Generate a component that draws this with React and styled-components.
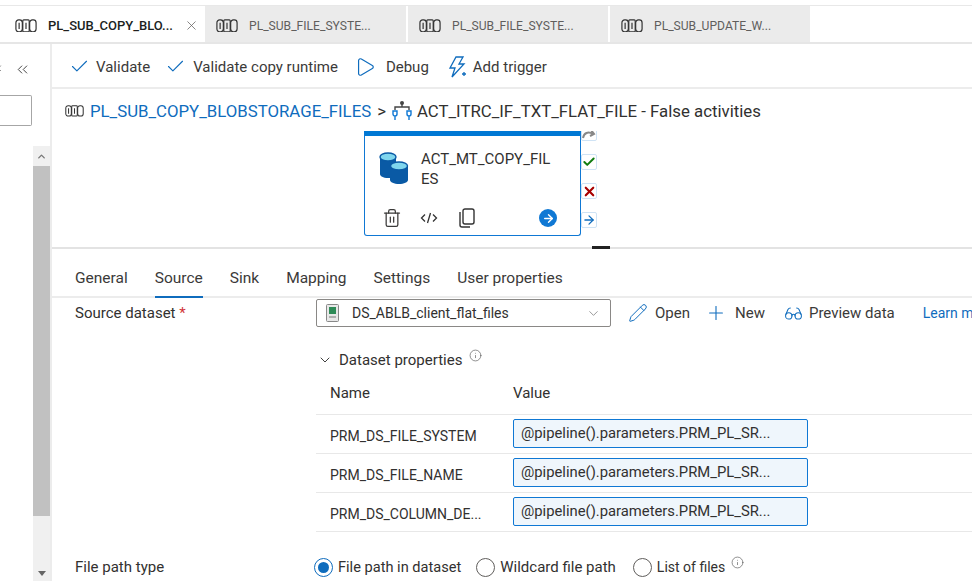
import React from 'react';
import styled, { createGlobalStyle } from 'styled-components';
import { ChevronsLeft, ChevronsDown, ChevronDown, Check, Play, Pencil, Plus, Glasses, Trash2, X, ArrowRight, Info, ChevronUp } from 'lucide-react';

const GlobalStyle = createGlobalStyle`
    html, body {
        margin: 0;
        padding: 0;
        background: #fff;
    }
    body {
        width: 972px;
        height: 581px;
        overflow: hidden;
        font-family: Roboto, "Noto Sans", sans-serif;
        color: #323130;
    }
    * {
        box-sizing: border-box;
    }
    svg {
        flex-shrink: 0;
    }
`

const Page = styled.div`
    width: 972px;
    height: 581px;
    display: flex;
    flex-direction: column;
    overflow: hidden;
`

const TabStrip = styled.div`
    display: flex;
    height: 39px;
    margin-top: 5px;
    padding-left: 2px;
    gap: 2px;
    border-top: 1px solid #e8e8e8;
    border-bottom: 2px solid #e6e6e6;
    flex-shrink: 0;
`
const PipeTab = styled.div`
    width: ${p => p.$width}px;
    height: 36px;
    display: flex;
    align-items: center;
    padding: 3px 0 0 ${p => p.$active ? 13 : 11}px;
    gap: 11px;
    font-size: ${p => p.$active ? 13 : 12.1}px;
    white-space: nowrap;
    background: ${p => p.$active ? '#fff' : '#ebebeb'};
    color: ${p => p.$active ? '#201f1e' : '#605e5c'};
    font-weight: ${p => p.$active ? 500 : 400};
`
const TabClose = styled.span`
    display: flex;
    margin-left: auto;
    margin-right: 9px;
    color: #605e5c;
`

const Body = styled.div`
    flex: 1;
    display: flex;
    min-height: 0;
`
const Sidebar = styled.div`
    width: 52px;
    flex-shrink: 0;
    border-right: 2px solid #ececec;
    display: flex;
    flex-direction: column;
`
const CollapseRow = styled.div`
    height: 51px;
    display: flex;
    align-items: center;
    margin-left: -11px;
    gap: 9px;
    color: #444;
`
const SearchStub = styled.div`
    width: 32px;
    height: 31px;
    border: 1px solid #a6a6a6;
    border-left: none;
    border-radius: 0 2px 2px 0;
    flex-shrink: 0;
`
const ScrollTrack = styled.div`
    width: 17px;
    margin: 20px 0 0 33px;
    flex: 1;
    background: #f0f0f0;
    display: flex;
    flex-direction: column;
    color: #777;
`
const ScrollArrow = styled.div`
    height: 20px;
    display: flex;
    align-items: center;
    justify-content: center;
`
const ScrollThumb = styled.div`
    height: 350px;
    background: #c1c1c1;
`
const ScrollDown = styled.div`
    margin-top: auto;
    height: 16px;
    display: flex;
    justify-content: center;
    align-items: center;
    &::before {
        content: '';
        border-left: 4px solid transparent;
        border-right: 4px solid transparent;
        border-top: 5px solid #666;
    }
`

const Main = styled.div`
    flex: 1;
    min-width: 0;
    display: flex;
    flex-direction: column;
`
const Toolbar = styled.div`
    height: 45px;
    padding: 2px 0 0 17px;
    display: flex;
    align-items: center;
    font-size: 15px;
    border-bottom: 2px solid #ececec;
    flex-shrink: 0;
`
const ToolButton = styled.div`
    display: flex;
    align-items: center;
    gap: ${p => p.$gap}px;
    margin-right: ${p => p.$after}px;
    white-space: nowrap;
    color: #3b3a39;
    svg { color: #0f6cbd; }
`
const Breadcrumb = styled.div`
    height: 42px;
    padding: 2px 0 0 13px;
    display: flex;
    align-items: center;
    font-size: 16.8px;
    white-space: nowrap;
    flex-shrink: 0;
`
const CrumbLink = styled.span`
    color: #0f6cbd;
    margin-left: 6px;
`
const CrumbSep = styled.span`
    margin: 0 6px;
`
const CrumbTitle = styled.span`
    margin-left: 5px;
`

const Canvas = styled.div`
    height: 116px;
    padding-left: 312px;
    display: flex;
    align-items: flex-start;
    flex-shrink: 0;
    overflow: hidden;
`
const SplitBar = styled.div`
    height: 2px;
    flex-shrink: 0;
    background: #e3e3e3;
    position: relative;
    &::after {
        content: '';
        position: absolute;
        left: 540px;
        top: -1px;
        width: 18px;
        height: 3px;
        background: #222;
    }
`
const ActivityCard = styled.div`
    width: 217px;
    height: 105px;
    border: 1px solid #0f78d4;
    border-top: 5px solid #0078d4;
    border-radius: 0 0 3px 3px;
    padding: 13px 0 0 14px;
    display: flex;
    flex-direction: column;
    flex-shrink: 0;
`
const CardHead = styled.div`
    display: flex;
    gap: 12px;
    height: 50px;
    svg { margin-top: 3px; }
`
const CardName = styled.div`
    width: 134px;
    font-size: 15px;
    line-height: 20px;
    word-break: break-all;
    color: #323130;
`
const CardActions = styled.div`
    display: flex;
    align-items: center;
    margin-top: 9px;
    color: #3b3a39;
    padding-left: 3px;
`
const CardAction = styled.span`
    display: flex;
    width: 38px;
`
const GoCircle = styled.span`
    width: 18px;
    height: 18px;
    margin-left: 43px;
    border-radius: 50%;
    background: #0f78d4;
    color: #fff;
    display: flex;
    align-items: center;
    justify-content: center;
`
const SideActions = styled.div`
    display: flex;
    flex-direction: column;
    gap: 13px;
    margin-top: -6px;
`
const SideAction = styled.div`
    width: 16px;
    height: 16px;
    border: 1px solid #cfe3f5;
    border-radius: 2px;
    display: flex;
    align-items: center;
    justify-content: center;
    color: ${p => p.$color};
`

const DetailTabs = styled.div`
    height: 49px;
    padding: 17px 0 0 23px;
    display: flex;
    gap: 27px;
    font-size: 15.5px;
    border-bottom: 2px solid #ececec;
    flex-shrink: 0;
`
const DetailTab = styled.div`
    height: 32px;
    line-height: 24px;
    white-space: nowrap;
    color: #3b3a39;
    border-bottom: ${p => p.$active ? '2px solid #0f6cbd' : 'none'};
`

const Form = styled.div`
    flex: 1;
    min-height: 0;
    padding-left: 23px;
    font-size: 15px;
    color: #323130;
    white-space: nowrap;
`
const DatasetRow = styled.div`
    display: flex;
    align-items: center;
    height: 30px;
`
const FieldLabel = styled.div`
    width: 241px;
    flex-shrink: 0;
`
const Required = styled.span`
    color: #d13438;
`
const Select = styled.div`
    width: 295px;
    height: 28px;
    border: 1px solid #8a8886;
    border-radius: 2px;
    display: flex;
    align-items: center;
    padding: 0 9px 0 9px;
    gap: 13px;
    flex-shrink: 0;
    font-size: 14px;
    svg:last-child { margin-left: auto; color: #777; }
`
const DatasetAction = styled.div`
    display: flex;
    align-items: center;
    gap: ${p => p.$gap}px;
    margin-left: ${p => p.$before}px;
    color: #3b3a39;
    svg { color: #0f6cbd; }
`
const LearnLink = styled.span`
    color: #0f6cbd;
    font-size: 14px;
    margin-left: 28px;
`
const PropsSection = styled.div`
    margin: 19px 0 0 241px;
`
const PropsTitle = styled.div`
    display: flex;
    align-items: center;
    gap: 6px;
    height: 26px;
    padding-left: 1px;
`
const Sup = styled.span`
    display: flex;
    margin: -10px 0 0 1px;
    color: #555;
`
const PropsGrid = styled.div`
    display: grid;
    grid-template-columns: 197px 295px;
    width: 656px;
`
const HeadCell = styled.div`
    height: 42px;
    padding: 10px 0 0 ${p => p.$pad}px;
    line-height: 20px;
    border-bottom: 1px solid #e8e8e8;
    margin-right: ${p => p.$last ? '-164px' : '0'};
`
const NameCell = styled.div`
    height: 39px;
    padding: 4px 0 0 14px;
    font-size: 14px;
    line-height: 35px;
    border-bottom: 1px solid #e8e8e8;
`
const ValueCell = styled.div`
    height: 39px;
    padding-top: 4px;
    border-bottom: 1px solid #e8e8e8;
    margin-right: -164px;
`
const ValueInput = styled.div`
    width: 295px;
    height: 29px;
    border: 1px solid #0f78d4;
    border-radius: 2px;
    background: #eff6fc;
    padding-left: 7px;
    font-size: 14.8px;
    line-height: 27px;
    color: #323130;
`
const PathRow = styled.div`
    display: flex;
    align-items: center;
    margin-top: 20px;
    height: 30px;
`
const RadioGroup = styled.div`
    display: flex;
    align-items: center;
    margin-left: -2px;
`
const RadioOption = styled.div`
    display: flex;
    align-items: center;
    gap: 5px;
    margin-right: ${p => p.$after}px;
    font-size: ${p => p.$size}px;
`
const RadioDot = styled.span`
    width: 19px;
    height: 19px;
    border-radius: 50%;
    border: 1px solid ${p => p.$on ? '#0f6cbd' : '#605e5c'};
    display: flex;
    align-items: center;
    justify-content: center;
    &::after {
        content: '';
        width: 11px;
        height: 11px;
        border-radius: 50%;
        background: ${p => p.$on ? '#0f6cbd' : 'transparent'};
    }
`

function PipelineIcon({ size = 22 }) {
    return (
        <svg width={size} height={size * 0.625} viewBox="0 0 24 15" fill="none" stroke="#333" strokeWidth="1.3">
            <rect x="1" y="1" width="7" height="13" rx="3" />
            <rect x="8.5" y="1" width="7" height="13" rx="1" />
            <rect x="16" y="1" width="7" height="13" rx="3" />
            <path d="M4.5 4v7M12 4v7" />
        </svg>
    )
}

function TriggerIcon() {
    return (
        <svg width="20" height="24" viewBox="0 0 20 24" fill="none" stroke="#0f6cbd" strokeWidth="1.3">
            <path d="M9 2h7l-4 7h5L5 22l3-9H3z" />
            <path d="M15 19h4M17 17v4" />
        </svg>
    )
}

function IfIcon() {
    return (
        <svg width="20" height="22" viewBox="0 0 20 22" fill="none" strokeWidth="1.4">
            <circle cx="10" cy="3" r="2" fill="#444" />
            <path d="M3 10V7h14v3M10 3v4" stroke="#444" />
            <path d="M1 11h4v3a2 2 0 0 1-4 0zM15 11h4v3a2 2 0 0 1-4 0zM3 16v4M17 16v4" stroke="#0f78d4" />
        </svg>
    )
}

function BlobIcon() {
    return (
        <svg width="30" height="33" viewBox="0 0 30 33">
            <path d="M1 6v16c0 2 3 4 8 4s8-2 8-4V6z" fill="#0a5aa5" />
            <ellipse cx="9" cy="5" rx="8" ry="4" fill="#7fd6ee" stroke="#0a5aa5" strokeWidth="1.4" />
            <path d="M11 14v14c0 2 4 4 9 4s9-2 9-4V14z" fill="#0a5aa5" />
            <ellipse cx="20" cy="14" rx="8.5" ry="4" fill="#7fd6ee" stroke="#0a5aa5" strokeWidth="1.4" />
        </svg>
    )
}

function CodeIcon() {
    return (
        <svg width="18" height="18" viewBox="0 0 18 18" fill="none" stroke="#333" strokeWidth="1.3">
            <path d="M5 5.5L1.5 9 5 12.5M13 5.5L16.5 9 13 12.5M10.5 4l-3 10" />
        </svg>
    )
}

function CopyIcon() {
    return (
        <svg width="18" height="20" viewBox="0 0 18 20" fill="none" stroke="#333" strokeWidth="1.4">
            <rect x="5" y="1" width="11" height="15" rx="2" />
            <path d="M2 4v13a2 2 0 0 0 2 2h8" />
        </svg>
    )
}

function FileIcon() {
    return (
        <svg width="13" height="18" viewBox="0 0 13 18">
            <rect x="0.5" y="0.5" width="12" height="17" rx="1" fill="#e8e8e8" stroke="#888" />
            <rect x="3" y="3" width="7" height="7" fill="#2e8b57" />
            <path d="M3 13h7" stroke="#777" />
        </svg>
    )
}

function RedoIcon() {
    return (
        <svg width="14" height="12" viewBox="0 0 14 12" fill="none" stroke="#888" strokeWidth="2">
            <path d="M1 11c1-5 5-7 10-4M9 3l3 4-4 2" />
        </svg>
    )
}

const tabs = [
    { name: 'PL_SUB_COPY_BLO...', width: 201, active: true },
    { name: 'PL_SUB_FILE_SYSTE...', width: 201 },
    { name: 'PL_SUB_FILE_SYSTE...', width: 200 },
    { name: 'PL_SUB_UPDATE_W...', width: 200 },
]

const params = ['PRM_DS_FILE_SYSTEM', 'PRM_DS_FILE_NAME', 'PRM_DS_COLUMN_DE...']

export default function App() {
    return (
        <Page>
            <GlobalStyle />
            <TabStrip>
                {tabs.map((tab, i) => (
                    <PipeTab key={i} $width={tab.width} $active={tab.active}>
                        <PipelineIcon />
                        {tab.name}
                        {tab.active && <TabClose><X size={15} strokeWidth={1.2} /></TabClose>}
                    </PipeTab>
                ))}
            </TabStrip>
            <Body>
                <Sidebar>
                    <CollapseRow>
                        <ChevronsDown size={16} strokeWidth={1.4} />
                        <ChevronsLeft size={17} strokeWidth={1.4} />
                    </CollapseRow>
                    <SearchStub />
                    <ScrollTrack>
                        <ScrollArrow><ChevronUp size={11} strokeWidth={3} /></ScrollArrow>
                        <ScrollThumb />
                        <ScrollDown />
                    </ScrollTrack>
                </Sidebar>
                <Main>
                    <Toolbar>
                        <ToolButton $gap={6} $after={15}><Check size={21} strokeWidth={1.3} />Validate</ToolButton>
                        <ToolButton $gap={7} $after={16}><Check size={21} strokeWidth={1.3} />Validate copy runtime</ToolButton>
                        <ToolButton $gap={10} $after={18}><Play size={22} strokeWidth={1.3} />Debug</ToolButton>
                        <ToolButton $gap={6} $after={0}><TriggerIcon />Add trigger</ToolButton>
                    </Toolbar>
                    <Breadcrumb>
                        <PipelineIcon size={19} />
                        <CrumbLink>PL_SUB_COPY_BLOBSTORAGE_FILES</CrumbLink>
                        <CrumbSep>&gt;</CrumbSep>
                        <IfIcon />
                        <CrumbTitle>ACT_ITRC_IF_TXT_FLAT_FILE - False activities</CrumbTitle>
                    </Breadcrumb>
                    <Canvas>
                        <ActivityCard>
                            <CardHead>
                                <BlobIcon />
                                <CardName>ACT_MT_COPY_FILES</CardName>
                            </CardHead>
                            <CardActions>
                                <CardAction><Trash2 size={20} strokeWidth={1.5} /></CardAction>
                                <CardAction><CodeIcon /></CardAction>
                                <CardAction><CopyIcon /></CardAction>
                                <GoCircle><ArrowRight size={13} strokeWidth={2.6} /></GoCircle>
                            </CardActions>
                        </ActivityCard>
                        <SideActions>
                            <SideAction $color="#888"><RedoIcon /></SideAction>
                            <SideAction $color="#107c10"><Check size={14} strokeWidth={3.4} /></SideAction>
                            <SideAction $color="#a80000"><X size={15} strokeWidth={3.4} /></SideAction>
                            <SideAction $color="#0f6cbd"><ArrowRight size={14} strokeWidth={2.2} /></SideAction>
                        </SideActions>
                    </Canvas>
                    <SplitBar />
                    <DetailTabs>
                        <DetailTab>General</DetailTab>
                        <DetailTab $active>Source</DetailTab>
                        <DetailTab>Sink</DetailTab>
                        <DetailTab>Mapping</DetailTab>
                        <DetailTab>Settings</DetailTab>
                        <DetailTab>User properties</DetailTab>
                    </DetailTabs>
                    <Form>
                        <DatasetRow>
                            <FieldLabel>Source dataset <Required>*</Required></FieldLabel>
                            <Select>
                                <FileIcon />
                                DS_ABLB_client_flat_files
                                <ChevronDown size={15} strokeWidth={1.2} />
                            </Select>
                            <DatasetAction $before={17} $gap={7}><Pencil size={20} strokeWidth={1.2} />Open</DatasetAction>
                            <DatasetAction $before={15} $gap={8}><Plus size={22} strokeWidth={1.2} />New</DatasetAction>
                            <DatasetAction $before={19} $gap={6}><Glasses size={19} strokeWidth={1.3} />Preview data</DatasetAction>
                            <LearnLink>Learn more</LearnLink>
                        </DatasetRow>
                        <PropsSection>
                            <PropsTitle>
                                <ChevronDown size={16} strokeWidth={1.4} />
                                Dataset properties
                                <Sup><Info size={13} strokeWidth={1.2} /></Sup>
                            </PropsTitle>
                            <PropsGrid>
                                <HeadCell $pad={14}>Name</HeadCell>
                                <HeadCell $pad={0} $last>Value</HeadCell>
                                {params.map(name => (
                                    <React.Fragment key={name}>
                                        <NameCell>{name}</NameCell>
                                        <ValueCell><ValueInput>@pipeline().parameters.PRM_PL_SR...</ValueInput></ValueCell>
                                    </React.Fragment>
                                ))}
                            </PropsGrid>
                        </PropsSection>
                        <PathRow>
                            <FieldLabel>File path type</FieldLabel>
                            <RadioGroup>
                                <RadioOption $size={14.6} $after={15}><RadioDot $on />File path in dataset</RadioOption>
                                <RadioOption $size={15} $after={17}><RadioDot />Wildcard file path</RadioOption>
                                <RadioOption $size={14} $after={0}>
                                    <RadioDot />List of files
                                    <Sup><Info size={13} strokeWidth={1.2} /></Sup>
                                </RadioOption>
                            </RadioGroup>
                        </PathRow>
                    </Form>
                </Main>
            </Body>
        </Page>
    );
}
